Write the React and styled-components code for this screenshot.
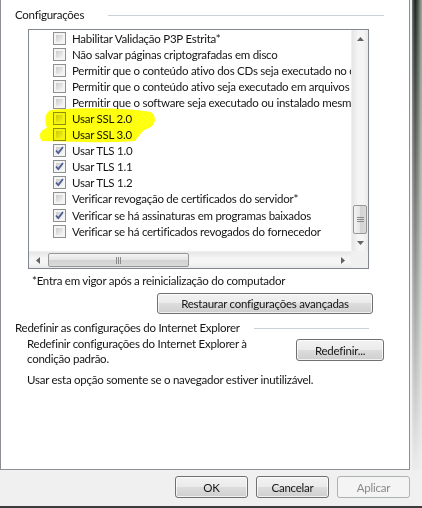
import React from 'react'
import styled, { createGlobalStyle } from 'styled-components'

const Global = createGlobalStyle`
  html, body { margin: 0; padding: 0; background: #f0f0f0; }
  body {
    font-family: "Lato", "Open Sans", sans-serif;
    font-size: 11.5px;
    letter-spacing: -0.25px;
    color: #151515;
  }
`

const Dialog = styled.div`
  width: 422px;
  height: 508px;
  background: #f0f0f0;
  display: flex;
  flex-direction: column;
  overflow: hidden;
  border-bottom: 2px solid #3c3c3c;
  box-sizing: border-box;
`

const Body = styled.div`
  display: flex;
  height: 470px;
`

const TabPage = styled.div`
  position: relative;
  width: 410px;
  height: 470px;
  box-sizing: border-box;
  background: #fff;
  border: 1px solid #8c8e94;
  border-top: none;
  padding: 7px 0 0 14px;
  display: flex;
  flex-direction: column;
`

const Frame = styled.div`
  flex: 1;
  background: linear-gradient(to bottom, transparent 0, #f0f0f0 480px),
    linear-gradient(to right, #f0f0f0 0 2px, #7a7a7a 2px, #1c241c 5px, #4a5a4a 8px, #9a9a9a 11px);
`

const Header = styled.div`
  display: flex;
  align-items: center;
  height: 16px;
  line-height: 16px;
  width: ${p => p.$width}px;
  gap: ${p => p.$gap}px;
  margin-top: ${p => p.$top || 0}px;
  white-space: nowrap;
  &::after {
    content: '';
    flex: 1;
    height: 1px;
    background: #c9d2d8;
  }
`

const ListBox = styled.div`
  margin: 6px 0 0 13px;
  width: 341px;
  height: 240px;
  box-sizing: border-box;
  border: 1px solid #828790;
  display: grid;
  grid-template-columns: 1fr 17px;
  grid-template-rows: 1fr 17px;
  overflow: hidden;
`

const Rows = styled.div`
  overflow: hidden;
  padding-left: 24px;
`

const Row = styled.div`
  display: flex;
  align-items: center;
  height: 16.1px;
  gap: 6px;
  white-space: nowrap;
`

const Box = styled.span`
  flex: none;
  width: 13px;
  height: 13px;
  box-sizing: border-box;
  border: 1px solid #8e8f8f;
  background: #f4f4f4;
  padding: 2px;
  display: flex;
  &::before {
    content: '';
    flex: 1;
    background: linear-gradient(135deg, #cbcbcb, #f6f6f6);
  }
`

const CheckMark = styled.svg`
  position: absolute;
  left: 1px;
  top: 1px;
`

const BoxWrap = styled.span`
  position: relative;
  display: flex;
`

const VScroll = styled.div`
  background: linear-gradient(to right, #e6e6e6, #f5f5f5 40%, #f5f5f5 70%, #e9e9e9);
  border-left: 1px solid #efefef;
  display: flex;
  flex-direction: column;
  align-items: stretch;
`

const HScroll = styled.div`
  background: linear-gradient(to bottom, #e6e6e6, #f5f5f5 40%, #f5f5f5 70%, #e9e9e9);
  border-top: 1px solid #efefef;
  display: flex;
  align-items: stretch;
`

const Corner = styled.div`
  background: #f0f0f0;
`

const Arrow = styled.div`
  flex: none;
  width: 17px;
  height: 17px;
  display: flex;
  align-items: center;
  justify-content: center;
`

const Gap = styled.div`
  flex: ${p => p.$flex || 'none'};
  width: ${p => p.$w || 0}px;
  height: ${p => p.$h || 0}px;
`

const Thumb = styled.div`
  flex: none;
  box-sizing: border-box;
  border: 1px solid #979797;
  border-radius: 2px;
  display: flex;
  align-items: center;
  justify-content: center;
  ${p => p.$vertical
    ? `height: 29px; margin: 0 1px; background: linear-gradient(to right, #f4f4f4, #e4e4e4 50%, #d2d2d2 51%, #dadada);`
    : `width: 141px; margin: 1px 0; background: linear-gradient(to bottom, #f4f4f4, #e4e4e4 50%, #d2d2d2 51%, #dadada);`}
`

const Note = styled.div`
  margin: 4px 0 0 17px;
  line-height: 16px;
  height: 16px;
  white-space: nowrap;
`

const Button = styled.button`
  font: inherit;
  letter-spacing: inherit;
  color: ${p => p.disabled ? '#8a8a8a' : '#151515'};
  height: ${p => p.$h || 22}px;
  width: ${p => p.$w}px;
  padding: 0;
  box-sizing: border-box;
  border: 1px solid ${p => p.disabled ? '#adb2b5' : '#707070'};
  border-radius: 3px;
  background: ${p => p.disabled
    ? '#f4f4f4'
    : 'linear-gradient(to bottom, #f2f2f2 0%, #ebebeb 48%, #dddddd 50%, #cfcfcf 100%)'};
  box-shadow: inset 0 0 0 1px ${p => p.disabled ? '#f4f4f4' : 'rgba(255,255,255,0.7)'};
  flex: none;
`

const RestoreRow = styled.div`
  display: flex;
  justify-content: flex-end;
  width: 358px;
  margin-top: 4px;
`

const ResetRow = styled.div`
  display: flex;
  justify-content: space-between;
  align-items: flex-start;
  width: 357px;
  margin: 3px 0 0 12px;
`

const ResetText = styled.div`
  line-height: 15px;
  width: 236px;
  margin-top: -3px;
`

const Plain = styled.div`
  margin: 6px 0 0 12px;
  line-height: 16px;
  white-space: nowrap;
`

const Footer = styled.div`
  display: flex;
  justify-content: flex-end;
  gap: 8px;
  padding: 6px 12px 0 0;
`

const Highlight = styled.svg`
  position: absolute;
  left: 0;
  top: 0;
  pointer-events: none;
  mix-blend-mode: multiply;
`

const items = [
  ['Habilitar Validação P3P Estrita*', 0],
  ['Não salvar páginas criptografadas em disco', 0],
  ['Permitir que o conteúdo ativo dos CDs seja executado no computador', 0],
  ['Permitir que o conteúdo ativo seja executado em arquivos do computador', 0],
  ['Permitir que o software seja executado ou instalado mesmo se a assinatura for inválida', 0],
  ['Usar SSL 2.0', 0],
  ['Usar SSL 3.0', 0],
  ['Usar TLS 1.0', 1],
  ['Usar TLS 1.1', 1],
  ['Usar TLS 1.2', 1],
  ['Verificar revogação de certificados do servidor*', 0],
  ['Verificar se há assinaturas em programas baixados', 1],
  ['Verificar se há certificados revogados do fornecedor', 0]
]

function Check ({ checked }) {
  return (
    <BoxWrap>
      <Box />
      {checked ? (
        <CheckMark width='11' height='11' viewBox='0 0 11 11'>
          <path d='M2 5.5 L4.3 8 L9 2' fill='none' stroke='#4a5c96' strokeWidth='1.8' />
        </CheckMark>
      ) : null}
    </BoxWrap>
  )
}

const Tri = ({ dir }) => {
  const pts = {
    up: '0,4 3.5,0 7,4',
    down: '0,0 7,0 3.5,4',
    left: '4,0 4,7 0,3.5',
    right: '0,0 0,7 4,3.5'
  }[dir]
  const vertical = dir === 'up' || dir === 'down'
  return (
    <svg width={vertical ? 7 : 4} height={vertical ? 4 : 7}>
      <polygon points={pts} fill='#5f6468' />
    </svg>
  )
}

const Grip = ({ vertical }) => (
  <svg width={7} height={7}>
    {[1, 3, 5].map(v => vertical
      ? <line key={v} x1='0' x2='7' y1={v + 0.5} y2={v + 0.5} stroke='#8a8a8a' />
      : <line key={v} y1='0' y2='7' x1={v + 0.5} x2={v + 0.5} stroke='#8a8a8a' />)}
  </svg>
)

export default function App () {
  return (
    <>
      <Global />
      <Dialog>
        <Body>
          <TabPage>
            <Header $width={369} $gap={24}>Configurações</Header>
            <ListBox>
              <Rows>
                {items.map(([label, checked]) => (
                  <Row key={label}>
                    <Check checked={checked} />
                    <span>{label}</span>
                  </Row>
                ))}
              </Rows>
              <VScroll>
                <Arrow><Tri dir='up' /></Arrow>
                <Gap $flex='1' />
                <Thumb $vertical><Grip vertical /></Thumb>
                <Arrow><Tri dir='down' /></Arrow>
              </VScroll>
              <HScroll>
                <Arrow><Tri dir='left' /></Arrow>
                <Gap $w={2} />
                <Thumb><Grip /></Thumb>
                <Gap $flex='1' />
                <Arrow><Tri dir='right' /></Arrow>
              </HScroll>
              <Corner />
            </ListBox>
            <Note>*Entra em vigor após a reinicialização do computador</Note>
            <RestoreRow>
              <Button $w={216} $h={21}>Restaurar configurações avançadas</Button>
            </RestoreRow>
            <Header $width={354} $gap={14} $top={6}>Redefinir as configurações do Internet Explorer</Header>
            <ResetRow>
              <ResetText>Redefinir configurações do Internet Explorer à condição padrão.</ResetText>
              <Button $w={88}>Redefinir...</Button>
            </ResetRow>
            <Plain>Usar esta opção somente se o navegador estiver inutilizável.</Plain>
            <Highlight width='200' height='160'>
              <path
                d='M50 110 C 80 107, 130 108, 150 112 C 156 116, 155 125, 148 128 C 141 130, 139 135, 134 141 C 110 143, 70 142, 41 141 C 37 136, 39 130, 46 128 C 43 120, 44 112, 50 110 Z'
                fill='#ffff10'
              />
            </Highlight>
          </TabPage>
          <Frame />
        </Body>
        <Footer>
          <Button $w={73}>OK</Button>
          <Button $w={73}>Cancelar</Button>
          <Button $w={73} disabled>Aplicar</Button>
        </Footer>
      </Dialog>
    </>
  )
}
